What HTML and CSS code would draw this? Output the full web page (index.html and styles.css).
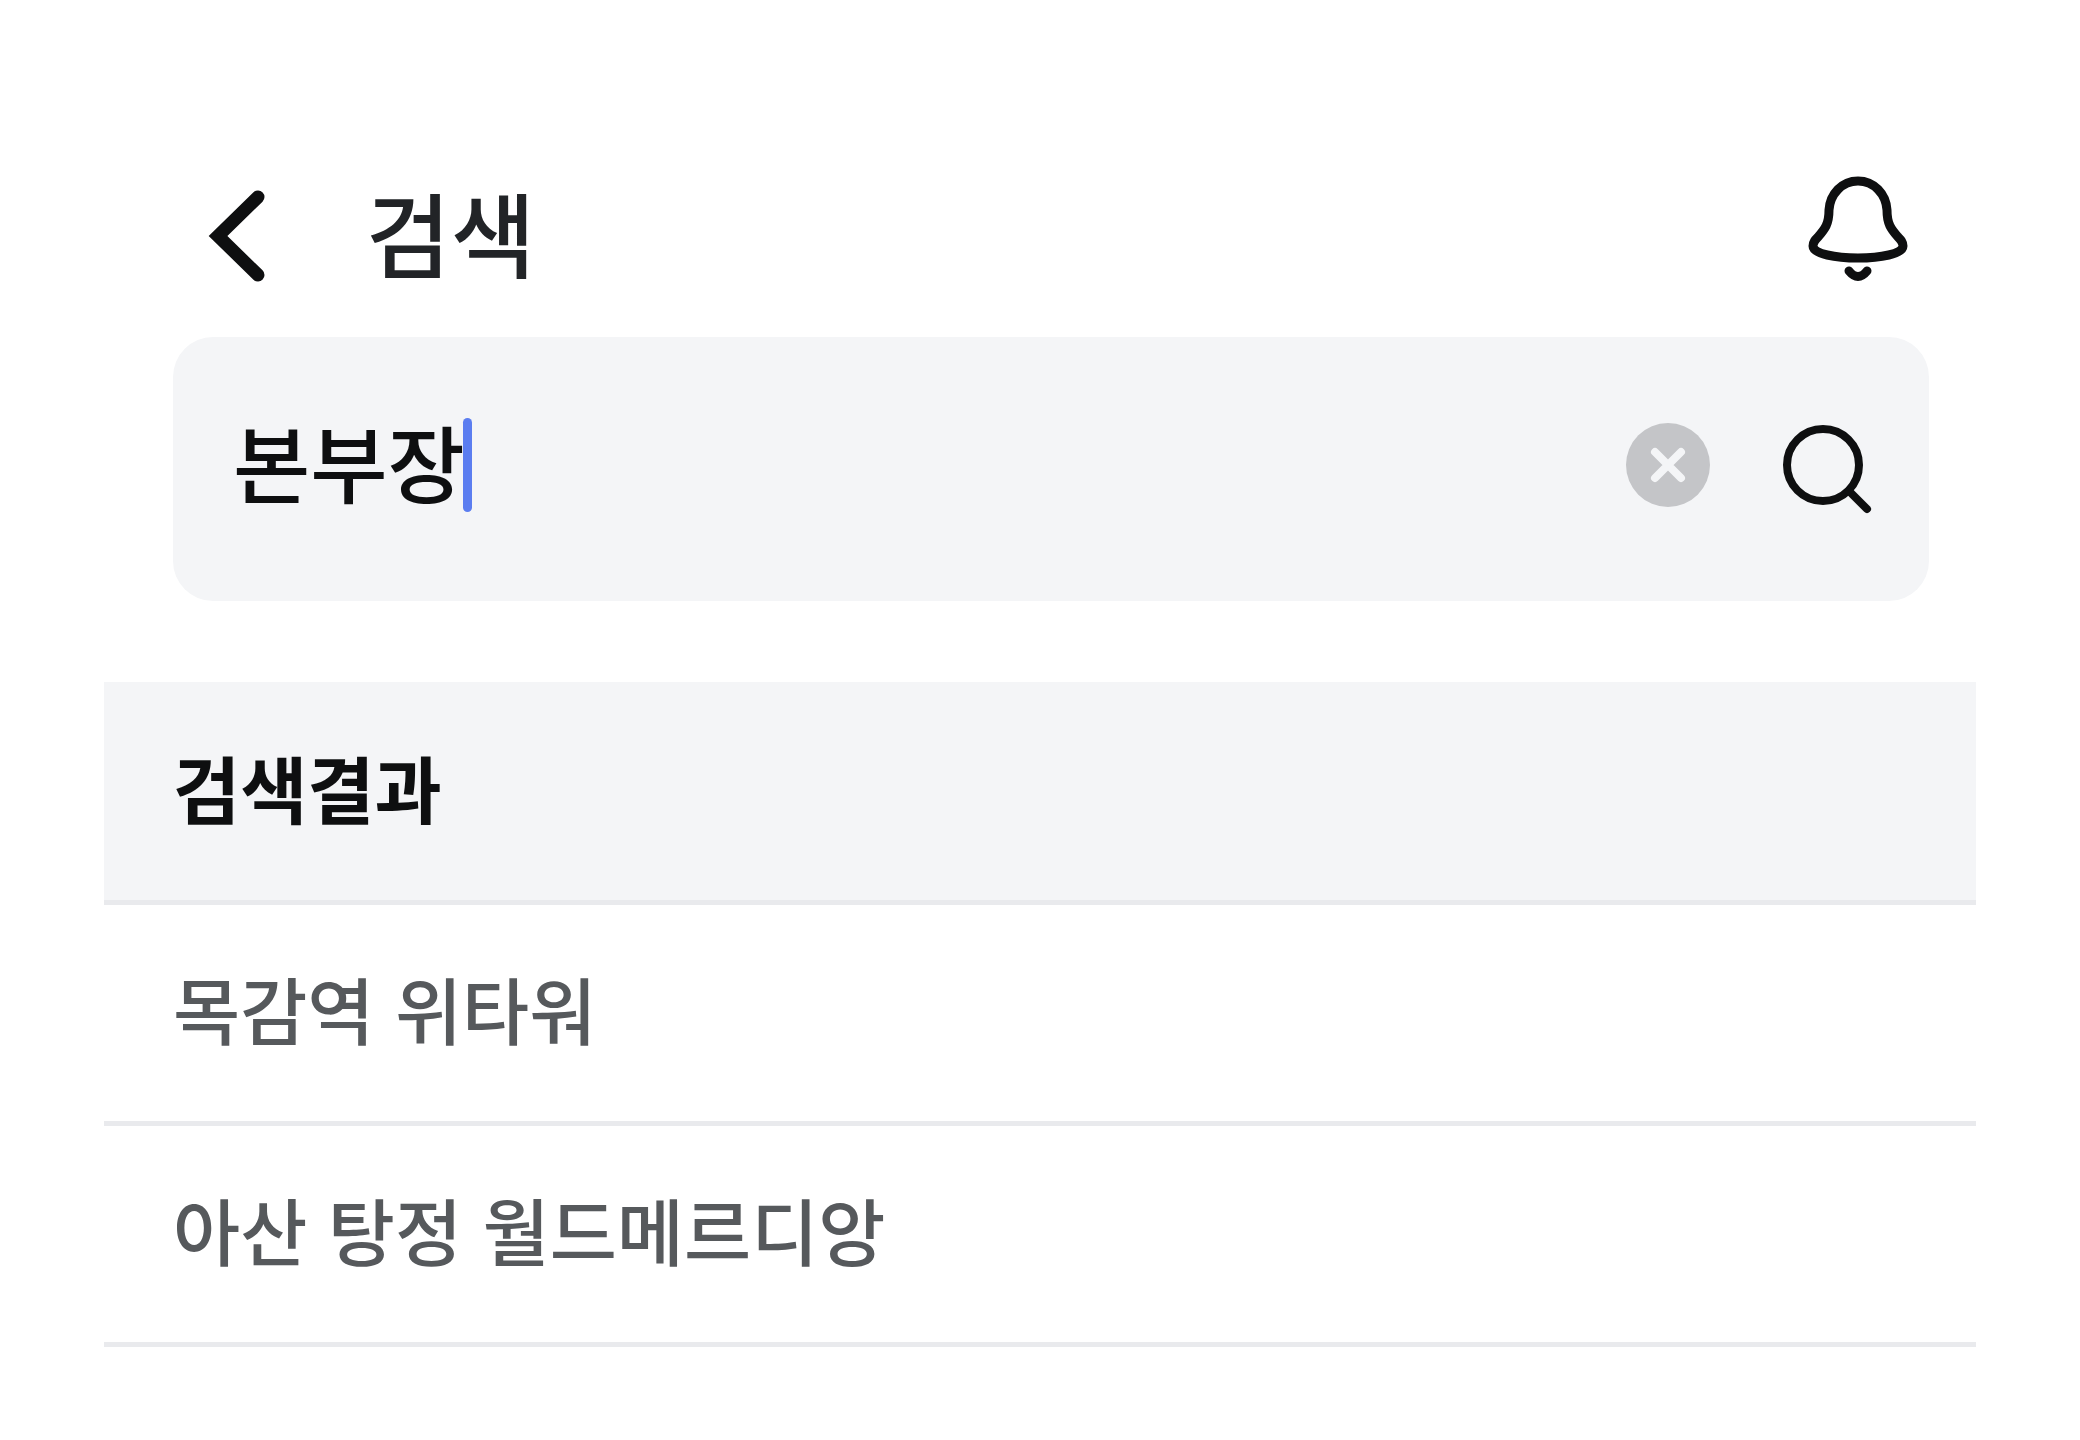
FILE: index.html
```html
<!DOCTYPE html>
<html lang="ko">
<head>
  <meta charset="UTF-8" />
  <meta name="viewport" content="width=device-width, initial-scale=1.0" />
  <title>검색</title>
  <link rel="stylesheet" href="styles.css">
</head>
<body>
  <main class="page">
    <header class="header">
      <button type="button" class="icon-btn" aria-label="뒤로">
        <svg width="56" height="96" viewBox="0 0 56 96" fill="none" stroke="#0e0f10" stroke-width="13" stroke-linecap="round" stroke-linejoin="miter">
          <path d="M49 9L9 48L49 87" />
        </svg>
      </button>
      <h1 class="title">검색</h1>
      <button type="button" class="icon-btn bell" aria-label="알림">
        <svg width="100" height="106" viewBox="0 6 100 106" fill="none" stroke="#0e0f10" stroke-width="9" stroke-linecap="round" stroke-linejoin="round">
          <path d="M50 11C34 11 22 24 21 40C21 54 17 59 10 67C7 70 5 72 5 76C5 84 28 88 50 88C72 88 95 84 95 76C95 72 93 70 90 67C83 59 79 54 79 40C78 24 66 11 50 11Z" />
          <path d="M41 101Q50 112 59 101" />
        </svg>
      </button>
    </header>

    <form id="searchForm" class="search">
      <input type="text" id="keyword" name="keyword" class="search-input" value="본부장" aria-label="검색어" autocomplete="off" />
      <span class="caret"></span>
      <button type="button" id="clear" class="icon-btn clear" aria-label="지우기">
        <svg width="86" height="86" viewBox="0 0 86 86" fill="none" stroke="#f4f5f7" stroke-width="8" stroke-linecap="round">
          <circle cx="43" cy="43" r="42" fill="#c4c5c8" stroke="none" />
          <path d="M30 30L56 56M56 30L30 56" />
        </svg>
      </button>
      <button type="submit" class="icon-btn" aria-label="검색">
        <svg width="96" height="96" viewBox="0 0 96 96" fill="none" stroke="#0e0f10" stroke-width="8" stroke-linecap="round">
          <circle cx="48" cy="48" r="36" />
          <path d="M74 74L92 92" />
        </svg>
      </button>
    </form>

    <section class="results">
      <h2 class="results-title">검색결과</h2>
      <ul class="results-list">
        <li><a href="#">목감역 위타워</a></li>
        <li><a href="#">아산 탕정 월드메르디앙</a></li>
      </ul>
    </section>
  </main>

  <script>
    const form = document.getElementById("searchForm");
    const keyword = document.getElementById("keyword");

    form.addEventListener("submit", (e) => {
      e.preventDefault();
    });

    document.getElementById("clear").addEventListener("click", () => {
      keyword.value = "";
      keyword.focus();
    });
  </script>
</body>
</html>
```
FILE: styles.css
```css
* {
  box-sizing: border-box;
}

body {
  margin: 0;
  background-color: #fff;
  color: #0e0f10;
  font-family: "Noto Sans CJK KR", sans-serif;
  font-weight: 500;
}

h1, h2, ul {
  margin: 0;
  padding: 0;
}

.page {
  padding: 176px 104px 92px;
}

/* Header */
.header {
  display: flex;
  align-items: center;
  height: 120px;
  margin: 0 47px 41px 69px;
  padding: 0 21px 0 36px;
}

.title {
  margin-left: 101px;
  padding-bottom: 10px;
  color: #222427;
  font-size: 92px;
  font-weight: 500;
  line-height: 110px;
}

.icon-btn {
  display: flex;
  padding: 0;
  border: 0;
  background: none;
  cursor: pointer;
}

.icon-btn svg {
  overflow: visible;
}

.bell {
  align-self: flex-start;
  margin-left: auto;
}

/* Search box */
.search {
  display: flex;
  align-items: center;
  margin: 0 47px 81px 69px;
  padding: 77px 58px 85px 60px;
  border-radius: 40px;
  background-color: #f4f5f7;
}

.search-input {
  width: 230px;
  height: 102px;
  padding: 0 0 10px;
  border: 0;
  outline: none;
  background: none;
  color: inherit;
  font-family: inherit;
  font-size: 84px;
  font-weight: 500;
}

.caret {
  width: 9px;
  height: 94px;
  border-radius: 5px;
  background-color: #5b7df0;
}

.clear {
  margin-left: auto;
  margin-right: 64px;
}

/* Results */
.results-title,
.results-list li {
  padding: 48px 69px 60px;
  border-bottom: 5px solid #e9eaed;
  font-size: 73px;
  line-height: 108px;
}

.results-title {
  padding: 50px 69px 60px;
  background-color: #f4f5f7;
  font-weight: 700;
}

.results-list {
  list-style: none;
}

.results-list a {
  color: #56595c;
  text-decoration: none;
}
```
